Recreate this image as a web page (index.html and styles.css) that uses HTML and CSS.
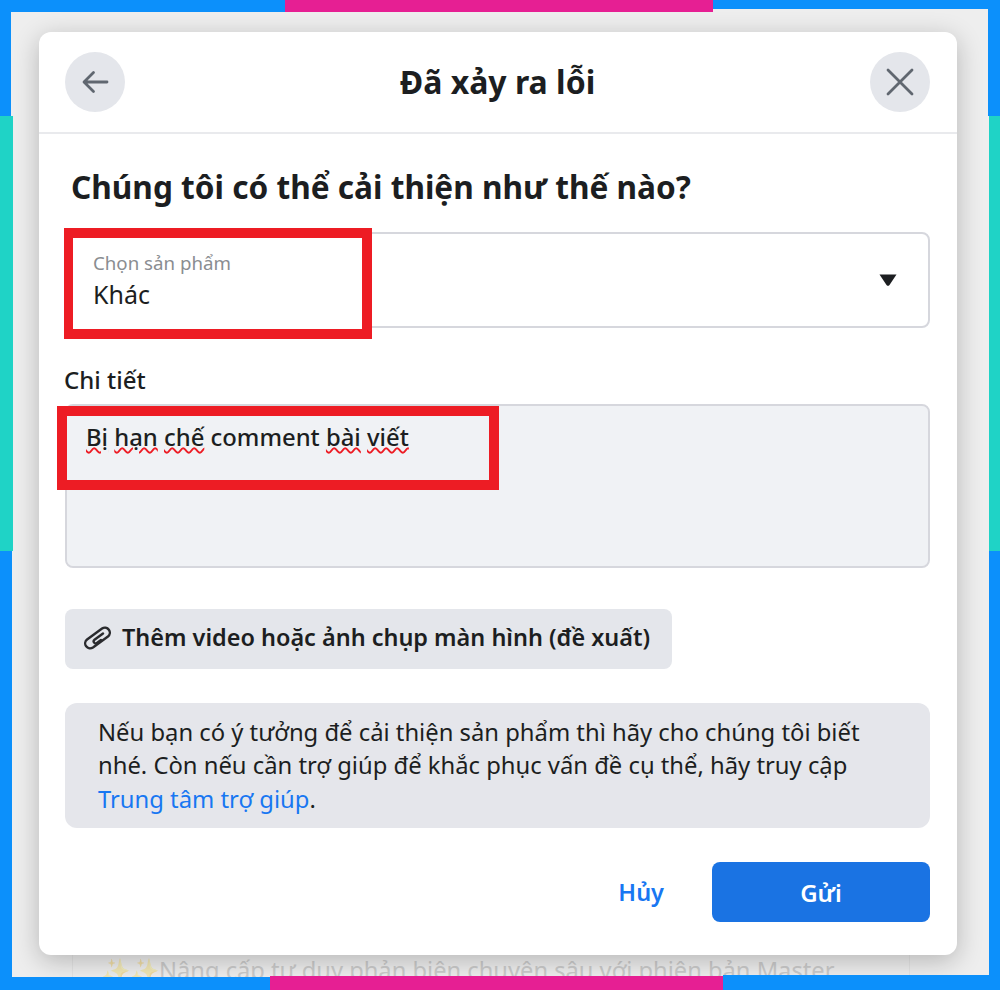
FILE: index.html
```html
<!DOCTYPE html>
<html lang="vi">
<head>
<meta charset="utf-8">
<title>Đã xảy ra lỗi</title>
<link rel="stylesheet" href="styles.css">
</head>
<body>
<div class="stage">
  <p class="behind"><span class="spark">✨✨</span>Nâng cấp tư duy phản biện chuyên sâu với phiên bản Master</p>
  <section class="modal">
    <header class="modal-head">
      <button class="round" aria-label="Quay lại">
        <svg width="30" height="30" viewBox="0 0 30 30"><path d="M27 15H4.500M13.500 5.500 4 15l9.500 9.500" fill="none" stroke="#606770" stroke-width="2.800" stroke-linecap="round" stroke-linejoin="round"/></svg>
      </button>
      <h1 class="title">Đã xảy ra lỗi</h1>
      <button class="round" aria-label="Đóng">
        <svg width="30" height="30" viewBox="0 0 30 30"><path d="M3 3 27 27M27 3 3 27" fill="none" stroke="#606770" stroke-width="2.800" stroke-linecap="round"/></svg>
      </button>
    </header>
    <div class="modal-body">
      <h2 class="question">Chúng tôi có thể cải thiện như thế nào?</h2>
      <div class="select">
        <div class="select-text">
          <div class="select-label">Chọn sản phẩm</div>
          <div class="select-value">Khác</div>
        </div>
        <svg class="caret" width="18" height="12" viewBox="0 0 18 12"><path d="M0.500 0.500H17.500L10.500 11a2 2 0 0 1-3 0Z" fill="#1c1e21"/></svg>
      </div>
      <div class="field-label">Chi tiết</div>
      <div class="textarea"><span class="typo">Bị</span> <span class="typo">hạn</span> <span class="typo">chế</span> comment <span class="typo">bài</span> <span class="typo">viết</span></div>
      <button class="attach">
        <svg width="28" height="28" viewBox="0 0 28 28"><path d="M23.950 11.530 8.950 22.530A5 5 0 0 1 3.050 14.470L18.050 3.470A5 5 0 0 1 23.950 11.530ZM19 8.500 10.500 14.800a2 2 0 0 0 2.400 3.200L17 15" fill="none" stroke="#2a2b2e" stroke-width="2.400" stroke-linecap="round" stroke-linejoin="round"/></svg>
        <span>Thêm video hoặc ảnh chụp màn hình (đề xuất)</span>
      </button>
      <p class="info">Nếu bạn có ý tưởng để cải thiện sản phẩm thì hãy cho chúng tôi biết nhé. Còn nếu cần trợ giúp để khắc phục vấn đề cụ thể, hãy truy cập <a class="link" href="#">Trung tâm trợ giúp</a>.</p>
      <div class="actions">
        <button class="cancel">Hủy</button>
        <button class="send">Gửi</button>
      </div>
    </div>
  </section>
  <div class="mark mark-select"></div>
  <div class="mark mark-detail"></div>
  <i class="edge e-top-l"></i><i class="edge e-top-p"></i><i class="edge e-top-r"></i>
  <i class="edge e-left-1"></i><i class="edge e-left-2"></i><i class="edge e-left-3"></i>
  <i class="edge e-right-1"></i><i class="edge e-right-2"></i><i class="edge e-right-3"></i>
  <i class="edge e-bot-l"></i><i class="edge e-bot-p"></i><i class="edge e-bot-r"></i>
</div>
</body>
</html>
```
FILE: styles.css
```css
* { box-sizing: border-box; }
html, body { margin: 0; padding: 0; }
body { font-family: "Noto Sans", "Open Sans", sans-serif; color: #1c1e21; }
button { font: inherit; border: 0; color: inherit; }

.stage {
  position: relative;
  width: 1000px;
  height: 990px;
  overflow: hidden;
  background: #eeeeee;
  padding: 32px 43px 0 39px;
}

.behind {
  position: absolute;
  left: 72px;
  top: 954px;
  width: 838px;
  margin: 0;
  padding-left: 28px;
  border-left: 1px solid #e4e4e4;
  border-right: 1px solid #e4e4e4;
  font-size: 23.700px;
  line-height: 32px;
  color: #cbcbcb;
  white-space: nowrap;
}
.spark { opacity: .3; }

.modal {
  position: relative;
  width: 918px;
  height: 923px;
  background: #fff;
  border-radius: 12px;
  box-shadow: 0 6px 26px rgba(0, 0, 0, .24);
}

.modal-head {
  height: 102px;
  padding: 0 27px 0 26px;
  border-bottom: 2px solid #e9eaed;
  display: flex;
  align-items: center;
  justify-content: space-between;
}
.round {
  width: 60px;
  height: 60px;
  border-radius: 50%;
  background: #e4e6eb;
  padding: 0;
  display: flex;
  align-items: center;
  justify-content: center;
}
.title {
  margin: 0;
  font-size: 32px;
  line-height: 40px;
  font-weight: 700;
  color: #1c1e21;
}

.modal-body { padding: 0 27px 0 26px; }
.question {
  margin: 0;
  padding: 32px 0 0 6px;
  font-size: 31.600px;
  line-height: 42px;
  font-weight: 700;
  color: #1c1e21;
}
.select {
  margin-top: 24px;
  height: 96px;
  background: #fff;
  border: 2px solid #d6d7dd;
  border-radius: 8px;
  padding: 0 31px 0 26px;
  display: flex;
  align-items: center;
  justify-content: space-between;
}
.select-text { position: relative; z-index: 2; }
.select-label { font-size: 18.700px; line-height: 28px; color: #8a8d91; }
.select-value { font-size: 25px; line-height: 34px; color: #1c1e21; }
.caret { display: block; }

.field-label {
  margin: 36px 0 0 -1px;
  font-size: 24px;
  line-height: 32px;
  font-weight: 500;
  color: #1c1e21;
}
.textarea {
  margin-top: 8px;
  height: 164px;
  background: #f0f2f5;
  border: 2px solid #d6d7dd;
  border-radius: 8px;
  padding: 15px 19px;
  font-size: 23.850px;
  line-height: 32px;
  font-weight: 500;
  position: relative;
  z-index: 2;
  background-clip: padding-box;
}
.typo {
  text-decoration: underline wavy #ed1c24 2px;
  text-underline-offset: 1px;
}

.attach {
  margin-top: 41px;
  height: 60px;
  width: 607px;
  padding: 0 0 4px 19px;
  background: #e4e6eb;
  border-radius: 8px;
  display: flex;
  align-items: center;
  gap: 10px;
  font-size: 23.450px;
  font-weight: 600;
  color: #1c1e21;
}
.attach svg { margin-top: 4px; }

.info {
  margin: 34px 0 0;
  height: 125px;
  padding: 13px 33px;
  background: #e5e6eb;
  border-radius: 12px;
  font-size: 23.800px;
  line-height: 33.400px;
  color: #1c1e21;
}
.link { color: #1877f2; text-decoration: none; }

.actions {
  margin-top: 34px;
  display: flex;
  justify-content: flex-end;
  align-items: center;
}
.cancel {
  background: none;
  padding: 0;
  margin-right: 48px;
  font-size: 23.500px;
  font-weight: 600;
  color: #1877f2;
}
.send {
  width: 218px;
  height: 60px;
  border-radius: 8px;
  background: #1a73e3;
  color: #fff;
  font-size: 24px;
  font-weight: 600;
}

/* red annotation rectangles drawn over the screenshot */
.mark { position: absolute; border: 10px solid #ed1c24; }
.mark-select { left: 64px; top: 228px; width: 308px; height: 111px; border-left-width: 9px; background: #fff; z-index: 1; }
.mark-detail { left: 57px; top: 406px; width: 442px; height: 84px; z-index: 3; }

/* decorative coloured frame */
.edge { position: absolute; display: block; z-index: 4; }
.e-top-l { left: 0; top: 0; width: 285px; height: 12px; background: #0c90fb; }
.e-top-p { left: 285px; top: 0; width: 428px; height: 12px; background: #e61f93; }
.e-top-r { left: 713px; top: 0; width: 287px; height: 9px; background: #0c90fb; }
.e-left-1 { left: 0; top: 0; width: 11px; height: 116px; background: #0c90fb; }
.e-left-2 { left: 0; top: 116px; width: 13px; height: 435px; background: #1fd3c6; }
.e-left-3 { left: 0; top: 551px; width: 12px; height: 439px; background: #0c90fb; }
.e-right-1 { right: 0; top: 0; width: 12px; height: 116px; background: #0c90fb; }
.e-right-2 { right: 0; top: 116px; width: 11px; height: 435px; background: #1fd3c6; }
.e-right-3 { right: 0; top: 551px; width: 11px; height: 439px; background: #0c90fb; }
.e-bot-l { left: 0; bottom: 0; width: 270px; height: 13px; background: #0c90fb; }
.e-bot-p { left: 270px; bottom: 0; width: 453px; height: 14px; background: #e61f93; }
.e-bot-r { left: 723px; bottom: 0; width: 277px; height: 15px; background: #0c90fb; }
```
